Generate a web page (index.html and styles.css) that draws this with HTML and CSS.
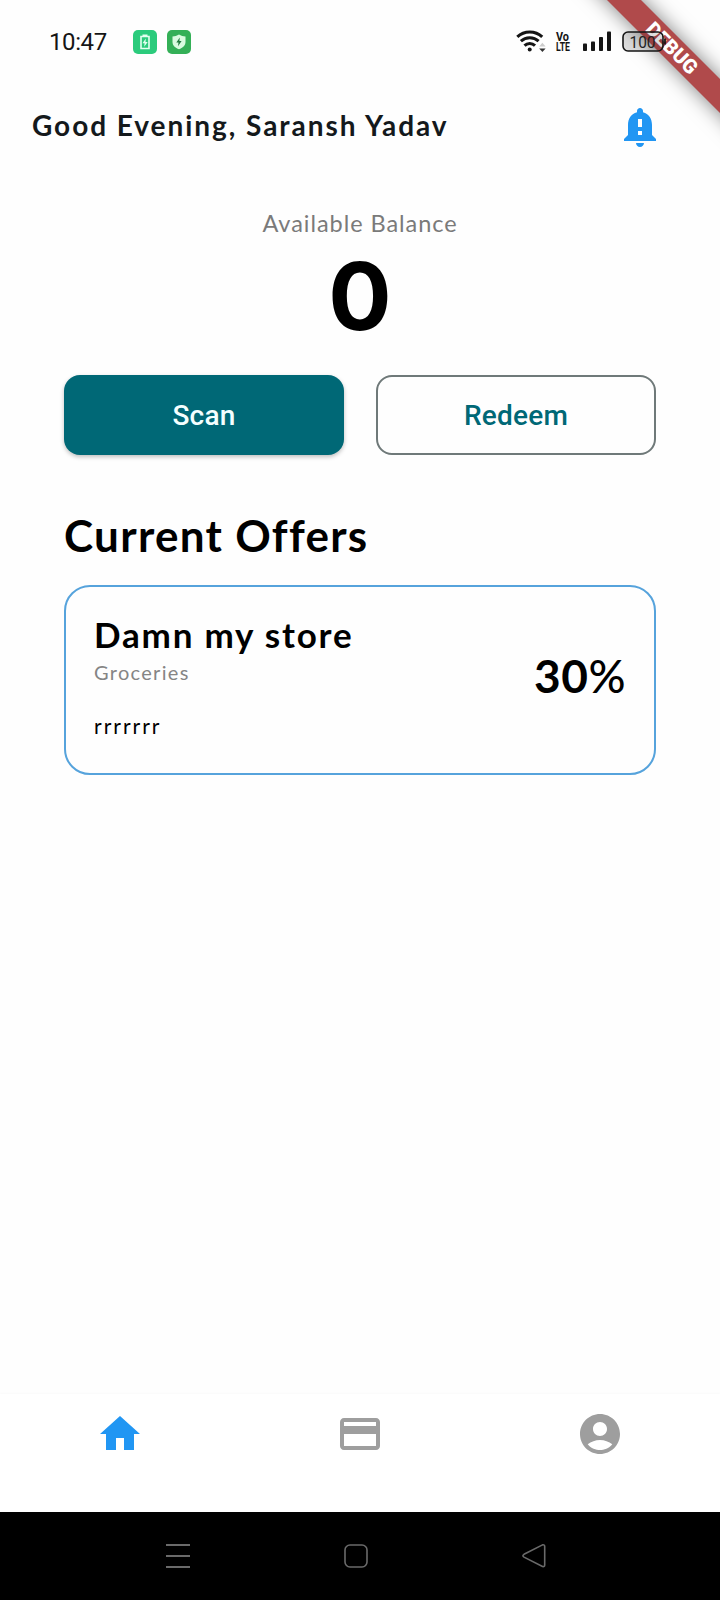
FILE: index.html
```html
<!DOCTYPE html>
<html lang="en">
<head>
<meta charset="utf-8">
<title>Home</title>
<link rel="stylesheet" href="styles.css">
</head>
<body>
<div class="screen">
  <div class="ribbon-corner"><div class="ribbon">DEBUG</div></div>

  <div class="status">
    <span class="time">10:47</span>
    <div class="status-apps">
      <svg width="24" height="24" viewBox="0 0 24 24"><rect width="24" height="24" rx="5" fill="#2bcb7c"/><path d="M8 6.5h8v12H8z" fill="none" stroke="#e4fff0" stroke-width="1.6"/><path d="M9.5 4.5h5v2h-5z" fill="#e4fff0"/><path d="M12.8 8.500l-3.300 4.800h2.100l-.4 3.400 3.500-4.700h-2.200z" fill="#e4fff0"/></svg>
      <svg width="24" height="24" viewBox="0 0 24 24"><rect width="24" height="24" rx="5" fill="#34b057"/><path d="M12 4.5c2 1.4 4.2 1.8 6.5 1.9v5.6c0 3.6-2.8 5.8-6.5 7.3-3.7-1.5-6.5-3.7-6.5-7.3V6.4c2.3-.1 4.5-.5 6.5-1.9z" fill="#d9fbdf"/><path d="M12.8 7.500l-3.500 5h2.200l-.5 3.700 3.600-5.100h-2.200z" fill="#237a3e"/></svg>
    </div>
    <div class="status-signals">
      <svg width="30" height="24" viewBox="0 0 30 24" fill="none" stroke="#151515" stroke-width="3"><path d="M1.300 6.900a18 18 0 0 1 24.900 0"/><path d="M4.900 11.200a13 13 0 0 1 17.700 0"/><path d="M8.500 15.600a7.500 7.500 0 0 1 10.500 0"/><circle cx="13.700" cy="19.600" r="2" fill="#151515" stroke="none"/><path d="M23.200 16.500l3.200-3.800 3.200 3.800z" fill="#ccc" stroke="none"/><path d="M23.200 18.500l3.200 3.500 3.200-3.500z" fill="#333" stroke="none"/></svg>
      <svg class="volte" width="16" height="24" viewBox="0 0 16 24"><text x="1" y="10.800" textLength="13" lengthAdjust="spacingAndGlyphs">Vo</text><text x="1" y="21.200" textLength="14" lengthAdjust="spacingAndGlyphs">LTE</text></svg>
      <svg class="bars" width="28" height="24" viewBox="0 0 28 24" fill="#151515"><rect y="13.500" width="4" height="7.500" rx=".8"/><rect x="8" y="11.500" width="4" height="9.500" rx=".8"/><rect x="16" y="7" width="4" height="14" rx=".8"/><rect x="24" y="1.500" width="4" height="19.500" rx=".8"/></svg>
      <svg class="battery" width="45" height="24" viewBox="0 0 45 24"><rect x="1" y="2" width="40" height="19" rx="5" fill="#000" fill-opacity=".13" stroke="#151515" stroke-width="1.600"/><path d="M43 8.500v6" stroke="#151515" stroke-width="1.800"/><text x="7.500" y="17.500" textLength="26" lengthAdjust="spacingAndGlyphs">100</text></svg>
    </div>
  </div>

  <header class="header">
    <h1 class="greeting">Good Evening, Saransh Yadav</h1>
    <svg width="48" height="48" viewBox="0 0 24 24"><path fill="#2196f3" d="M18 16v-5c0-3.070-1.640-5.640-4.500-6.320V4c0-.83-.67-1.500-1.500-1.500s-1.500.67-1.500 1.500v.68C7.630 5.360 6 7.920 6 11v5l-2 2v1h16v-1l-2-2zm-5 0h-2v-2h2v2zm0-4h-2V8h2v4zm-1 10c1.100 0 2-.9 2-2h-4c0 1.100.89 2 2 2z"/></svg>
  </header>

  <main class="content">
    <section class="balance">
      <span class="balance-label">Available Balance</span>
      <span class="balance-value">0</span>
    </section>
    <div class="actions">
      <button class="btn btn-filled">Scan</button>
      <button class="btn btn-outline">Redeem</button>
    </div>
    <h2 class="section-title">Current Offers</h2>
    <article class="offer">
      <div class="offer-info">
        <h3 class="offer-name">Damn my store</h3>
        <span class="offer-category">Groceries</span>
        <span class="offer-text">rrrrrrr</span>
      </div>
      <span class="offer-rate">30<span class="percent">%</span></span>
    </article>
  </main>

  <nav class="tabs">
    <svg width="48" height="48" viewBox="0 0 24 24" fill="#2196f3"><path d="M10 20v-6h4v6h5v-8h3L12 3 2 12h3v8z"/></svg>
    <svg width="48" height="48" viewBox="0 0 24 24" fill="#9e9e9e"><path d="M20 4H4c-1.110 0-1.990.89-1.990 2L2 18c0 1.110.89 2 2 2h16c1.110 0 2-.89 2-2V6c0-1.110-.89-2-2-2zm0 14H4v-6h16v6zm0-10H4V6h16v2z"/></svg>
    <svg width="48" height="48" viewBox="0 0 24 24" fill="#9e9e9e"><path d="M12 2C6.480 2 2 6.480 2 12s4.480 10 10 10 10-4.480 10-10S17.520 2 12 2zm0 4c1.930 0 3.500 1.570 3.500 3.500S13.930 13 12 13s-3.500-1.570-3.500-3.500S10.070 6 12 6zm0 14c-2.030 0-4.430-.82-6.140-2.880C7.550 15.800 9.680 15 12 15s4.450.8 6.140 2.120C16.430 19.180 14.030 20 12 20z"/></svg>
  </nav>

  <div class="sysnav">
    <svg width="24" height="24" viewBox="0 0 24 24" stroke="#6a6a6a" stroke-width="1.800"><path d="M0 1h24M0 12h24M0 23h24"/></svg>
    <svg width="24" height="24" viewBox="0 0 24 24" fill="none" stroke="#6a6a6a" stroke-width="1.600"><rect x="1" y="1" width="22" height="22" rx="5"/></svg>
    <svg width="24" height="24" viewBox="0 0 24 24" fill="none" stroke="#6a6a6a" stroke-width="1.600"><path d="M20.500.9L2 10.300q-2.200 1.400 0 2.800L20.500 22.500q2.200.5 2.200-1.600V2.500q0-2.100-2.200-1.600z"/></svg>
  </div>
</div>
</body>
</html>
```
FILE: styles.css
```css
* { box-sizing: border-box; }
body { margin: 0; background: #fff; }
h1, h2, h3 { margin: 0; }
svg { display: block; flex: none; overflow: visible; }

.screen {
  position: relative;
  display: flex;
  flex-direction: column;
  width: 720px;
  height: 1600px;
  background: #fefefe;
  font-family: Lato, "Liberation Sans", sans-serif;
  color: #000;
}

/* corner banner, drawn over the page */
.ribbon-corner {
  position: absolute;
  top: 0;
  right: 0;
  width: 160px;
  height: 160px;
  overflow: hidden;
}
.ribbon {
  position: absolute;
  top: 36px;
  left: -8px;
  width: 240px;
  height: 24px;
  transform: rotate(45deg);
  background: #b04a4b;
  box-shadow: 0 0 20px rgba(0, 0, 0, .5);
  color: #fff;
  font: 900 20px/24px Roboto, sans-serif;
  text-align: center;
}

.status {
  position: relative;
  display: flex;
  align-items: center;
  height: 84px;
  padding: 0 53px 0 49px;
}
.time {
  width: 84px;
  font: 400 24px/30px Roboto, sans-serif;
  letter-spacing: -.4px;
  color: #151515;
}
.status-apps { display: flex; gap: 10px; }
.status-signals { display: flex; margin-left: auto; }
.volte { margin-left: 9px; font: 700 13.500px Roboto, sans-serif; fill: #151515; }
.bars { margin-left: 12px; }
.battery { margin-left: 11px; font: 400 17px Roboto, sans-serif; fill: #222; }

.header {
  display: flex;
  justify-content: space-between;
  align-items: center;
  height: 86px;
  padding: 0 56px 0 32px;
}
.greeting {
  padding-bottom: 5px;
  font-size: 28px;
  line-height: 34px;
  font-weight: 700;
  letter-spacing: 1.950px;
  color: #14191c;
}

.content {
  flex: 1;
  display: flex;
  flex-direction: column;
  padding: 38px 64px 0;
}
.balance { display: flex; flex-direction: column; align-items: center; }
.balance-label {
  font-size: 23.500px;
  line-height: 30px;
  letter-spacing: .95px;
  color: #7a7a7a;
}
.balance-value {
  margin-top: 18px;
  font: 700 94px/80px Inter, sans-serif;
}
.actions { display: flex; justify-content: space-between; margin-top: 39px; }
.btn {
  width: 280px;
  height: 80px;
  padding: 2px 0 0;
  border: 0;
  border-radius: 16px;
  font: 500 28px/34px Roboto, sans-serif;
  letter-spacing: .2px;
}
.btn-filled {
  background: #006876;
  color: #f4ffff;
  box-shadow: 0 2px 4px rgba(0, 0, 0, .25);
}
.btn-outline {
  border: 2px solid #6f7979;
  background: #fefefe;
  color: #006876;
}
.section-title {
  margin-top: 55px;
  font-size: 44px;
  line-height: 50px;
  letter-spacing: 1.300px;
}
.offer {
  display: flex;
  justify-content: space-between;
  align-items: center;
  height: 190px;
  margin-top: 25px;
  padding: 0 28px;
  border: 2px solid #56a3dc;
  border-radius: 26px;
}
.offer-info { display: flex; flex-direction: column; padding-bottom: 8px; }
.offer-name { font-size: 35px; line-height: 42px; letter-spacing: 1.800px; }
.offer-category {
  margin-top: 4px;
  font-size: 20px;
  line-height: 26px;
  letter-spacing: 1.300px;
  color: #858585;
}
.offer-text { margin-top: 28px; font-size: 21px; line-height: 26px; letter-spacing: 2px; }
.offer-rate {
  padding-bottom: 9px;
  font-size: 46px;
  line-height: 54px;
  font-weight: 700;
  letter-spacing: .5px;
}
.percent { font-weight: 500; }

.tabs {
  display: grid;
  grid-template-columns: repeat(3, 1fr);
  justify-items: center;
  height: 118px;
  padding-top: 16px;
  background: #fff;
  box-shadow: 0 -1px 2px rgba(0, 0, 0, .02);
}

.sysnav {
  display: flex;
  align-items: center;
  height: 88px;
  padding-left: 166px;
  gap: 154px;
  background: #000;
}
```
